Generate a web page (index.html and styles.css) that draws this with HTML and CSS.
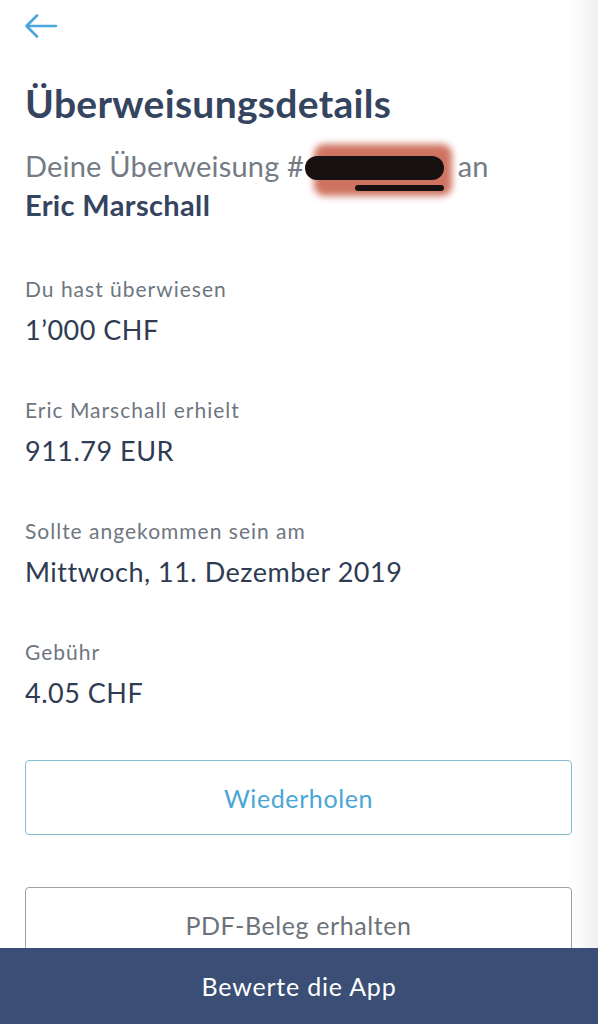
FILE: index.html
```html
<!DOCTYPE html>
<html lang="de">
<head>
<meta charset="utf-8">
<title>Überweisungsdetails</title>
<link rel="stylesheet" href="styles.css">
</head>
<body>
<main class="page">
  <header class="topbar">
    <svg class="back" width="34" height="26" viewBox="0 0 34 26" aria-label="Zurück">
      <path d="M32 13H3M13 2.5L2.5 13L13 23.5" fill="none" stroke="#4aa7dc" stroke-width="2.6" stroke-linecap="round" stroke-linejoin="round"/>
    </svg>
  </header>

  <h1 class="title">Überweisungsdetails</h1>

  <p class="subtitle">Deine Überweisung #<span class="redacted"><span class="smudge"></span><span class="scribble"></span><span class="scribble s2"></span></span> an<br><strong class="recipient">Eric Marschall</strong></p>

  <section class="details">
    <div class="item">
      <div class="label">Du hast überwiesen</div>
      <div class="value">1’000 CHF</div>
    </div>
    <div class="item">
      <div class="label">Eric Marschall erhielt</div>
      <div class="value">911.79 EUR</div>
    </div>
    <div class="item">
      <div class="label">Sollte angekommen sein am</div>
      <div class="value">Mittwoch, 11. Dezember 2019</div>
    </div>
    <div class="item">
      <div class="label">Gebühr</div>
      <div class="value">4.05 CHF</div>
    </div>
  </section>

  <div class="actions">
    <button class="btn btn-primary">Wiederholen</button>
    <button class="btn btn-secondary">PDF-Beleg erhalten</button>
  </div>
</main>

<footer class="rate-bar">Bewerte die App</footer>
</body>
</html>
```

FILE: styles.css
```css
html, body {
  margin: 0;
  padding: 0;
}

body {
  width: 598px;
  height: 1024px;
  overflow: hidden;
  background: linear-gradient(to right, #ffffff 0, #ffffff 570px, #f6f6f6 586px, #efefef 598px);
  font-family: Lato, "Open Sans", Arial, sans-serif;
  color: #2f3b52;
}

.page {
  padding: 14px 26px 0 25px;
}

.topbar {
  height: 24px;
  display: flex;
  align-items: center;
}

.back {
  display: block;
  margin-left: -1px;
}

.title {
  margin: 43px 0 0;
  font-size: 39px;
  line-height: 44px;
  font-weight: 700;
  color: #35445f;
  letter-spacing: 0.3px;
}

.subtitle {
  margin: 21px 0 0;
  font-size: 29px;
  line-height: 39px;
  color: #747b84;
  letter-spacing: 0.2px;
}

.recipient {
  font-weight: 700;
  color: #35445f;
  letter-spacing: 0.35px;
}

.redacted {
  position: relative;
  display: inline-block;
  width: 146px;
  height: 28px;
  vertical-align: -5px;
}

.smudge {
  position: absolute;
  left: 10px;
  top: -10px;
  width: 138px;
  height: 52px;
  background: #c9644f;
  border-radius: 10px;
  filter: blur(3.5px);
  opacity: 0.9;
}

.scribble {
  position: absolute;
  left: 1px;
  top: 2px;
  width: 139px;
  height: 24px;
  background: #171111;
  border-radius: 12px;
}

.scribble.s2 {
  left: 51px;
  top: 31px;
  width: 89px;
  height: 6px;
}

.details {
  margin-top: 52px;
  display: flex;
  flex-direction: column;
  gap: 50px;
}

.item {
  display: flex;
  flex-direction: column;
  gap: 11px;
}

.label {
  font-size: 21px;
  line-height: 26px;
  color: #6e767f;
  letter-spacing: 1px;
}

.value {
  font-size: 27px;
  line-height: 34px;
  color: #2f3b52;
  letter-spacing: 0.5px;
}

.actions {
  margin-top: 50px;
  display: flex;
  flex-direction: column;
  gap: 52px;
}

.btn {
  display: block;
  width: 547px;
  height: 75px;
  padding: 0;
  background: #ffffff;
  border-radius: 4px;
  font-family: inherit;
  font-size: 25px;
  letter-spacing: 0.6px;
}

.btn-primary {
  border: 1.5px solid #86bccf;
  color: #4aa6d6;
}

.btn-secondary {
  border: 1.5px solid #9aa0a7;
  color: #6c727a;
}

.rate-bar {
  position: fixed;
  left: 0;
  right: 0;
  bottom: 0;
  height: 76px;
  background: #3b4e75;
  color: #ffffff;
  font-size: 25px;
  letter-spacing: 0.8px;
  display: flex;
  align-items: center;
  justify-content: center;
}
```
